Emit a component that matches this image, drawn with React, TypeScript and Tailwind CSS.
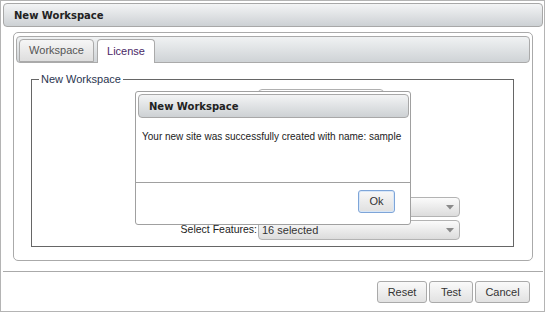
import React from "react";

function SelectBox({ text, width }: { text: string; width: string }) {
  return (
    <div
      className={`${width} h-[20px] border border-[#b3b3b3] rounded-[4px] bg-linear-to-b from-[#fbfbfb] to-[#dcdcdc] flex items-center justify-between pl-[3px] pr-[5px] text-[11px] text-[#333]`}
    >
      <span>{text}</span>
      <svg width="8" height="5" viewBox="0 0 8 5">
        <path d="M0 0 L8 0 L4 4.5 Z" fill="#8a8a8a" />
      </svg>
    </div>
  );
}

export default function App() {
  return (
    <div className="w-[545px] h-[312px] border border-[#b4b4b4] bg-white relative flex flex-col font-['Liberation_Sans',Arial,sans-serif] text-[#333]">
      {/* Window header */}
      <div className="ml-[2px] mr-[1px] mt-[2px] h-[24px] border border-[#a8a8a8] rounded-[4px] bg-linear-to-b from-[#f3f4f5] to-[#cdd1d4] flex items-center pl-[10px]">
        <span className="font-['DejaVu_Sans',sans-serif] font-bold text-[10px] text-[#222]">New Workspace</span>
      </div>

      {/* Tab panel */}
      <div className="mt-[5px] ml-[12px] mr-[11px] h-[229px] border border-[#aaaaaa] rounded-[5px] px-[2px] pt-[3px] flex flex-col">
        <div className="h-[27px] border border-[#aaaaaa] rounded-[4px] bg-linear-to-b from-[#f0f2f3] to-[#cfd3d6] flex items-end pl-[2px] gap-[3px]">
          <div className="w-[75px] h-[23px] border border-[#aaaaaa] rounded-t-[4px] bg-linear-to-b from-[#f6f6f6] to-[#dedede] flex items-center justify-center text-[11px] text-[#555]">
            Workspace
          </div>
          <div className="w-[58px] h-[24px] -mb-[1px] border border-b-0 border-[#aaaaaa] rounded-t-[4px] bg-white flex items-center justify-center text-[11px] text-[#4a2866]">
            License
          </div>
        </div>

        <fieldset className="mt-[10px] ml-[15px] mr-[16px] mb-[13px] flex-1 border border-[#666] min-w-0">
          <legend className="ml-[7px] px-[2px] text-[11px] leading-[13px] text-[#2a3550]">New Workspace</legend>
          <div className="flex flex-col pt-[3px]">
            <div className="flex items-center">
              <div className="w-[226px]" />
              <div className="w-[126px] h-[20px] border border-[#b0b0b0] rounded-[4px] bg-white" />
            </div>
            <div className="h-[88px]" />
            <div className="flex items-center">
              <div className="w-[226px]" />
              <SelectBox text="" width="w-[202px]" />
            </div>
            <div className="flex items-center mt-[3px]">
              <div className="w-[226px] text-right pr-[1px] text-[10.5px] text-[#222]">Select Features:</div>
              <SelectBox text="16 selected" width="w-[202px]" />
            </div>
          </div>
        </fieldset>
      </div>

      {/* Footer */}
      <div className="mt-[10px] ml-[2px] mr-[1px] border-t border-[#aaaaaa] pt-[9px] pr-[13px] flex justify-end gap-[2px]">
        <button className="w-[50px] h-[22px] border border-[#aaaaaa] rounded-[3px] bg-linear-to-b from-[#fafafa] to-[#e2e2e2] text-[11px] text-[#333]">
          Reset
        </button>
        <button className="w-[44px] h-[22px] border border-[#aaaaaa] rounded-[3px] bg-linear-to-b from-[#fafafa] to-[#e2e2e2] text-[11px] text-[#333]">
          Test
        </button>
        <button className="w-[55px] h-[22px] border border-[#aaaaaa] rounded-[3px] bg-linear-to-b from-[#fafafa] to-[#e2e2e2] text-[11px] text-[#333]">
          Cancel
        </button>
      </div>

      {/* Modal dialog */}
      <div className="absolute left-[134px] top-[90px] w-[276px] h-[134px] border border-[#a0a0a0] rounded-[3px] bg-white flex flex-col">
        <div className="ml-[2px] mr-[1px] mt-[2px] h-[24px] border border-[#a8a8a8] rounded-[4px] bg-linear-to-b from-[#f3f4f5] to-[#cdd1d4] flex items-center pl-[10px]">
          <span className="font-['DejaVu_Sans',sans-serif] font-bold text-[10px] text-[#222]">New Workspace</span>
        </div>
        <div className="h-[64px] pt-[13px] pl-[6px] text-[10px] leading-[12px] text-[#222]">
          Your new site was successfully created with name: sample
        </div>
        <div className="border-t border-[#a0a0a0] pt-[7px] pr-[15px] flex justify-end">
          <button className="w-[37px] h-[23px] border border-[#7ea5d8] rounded-[3px] shadow-[inset_0_0_0_1px_#d8e7f8] bg-linear-to-b from-[#f8f8f8] to-[#e0e0e0] text-[11px] text-[#333]">
            Ok
          </button>
        </div>
      </div>
    </div>
  );
}
